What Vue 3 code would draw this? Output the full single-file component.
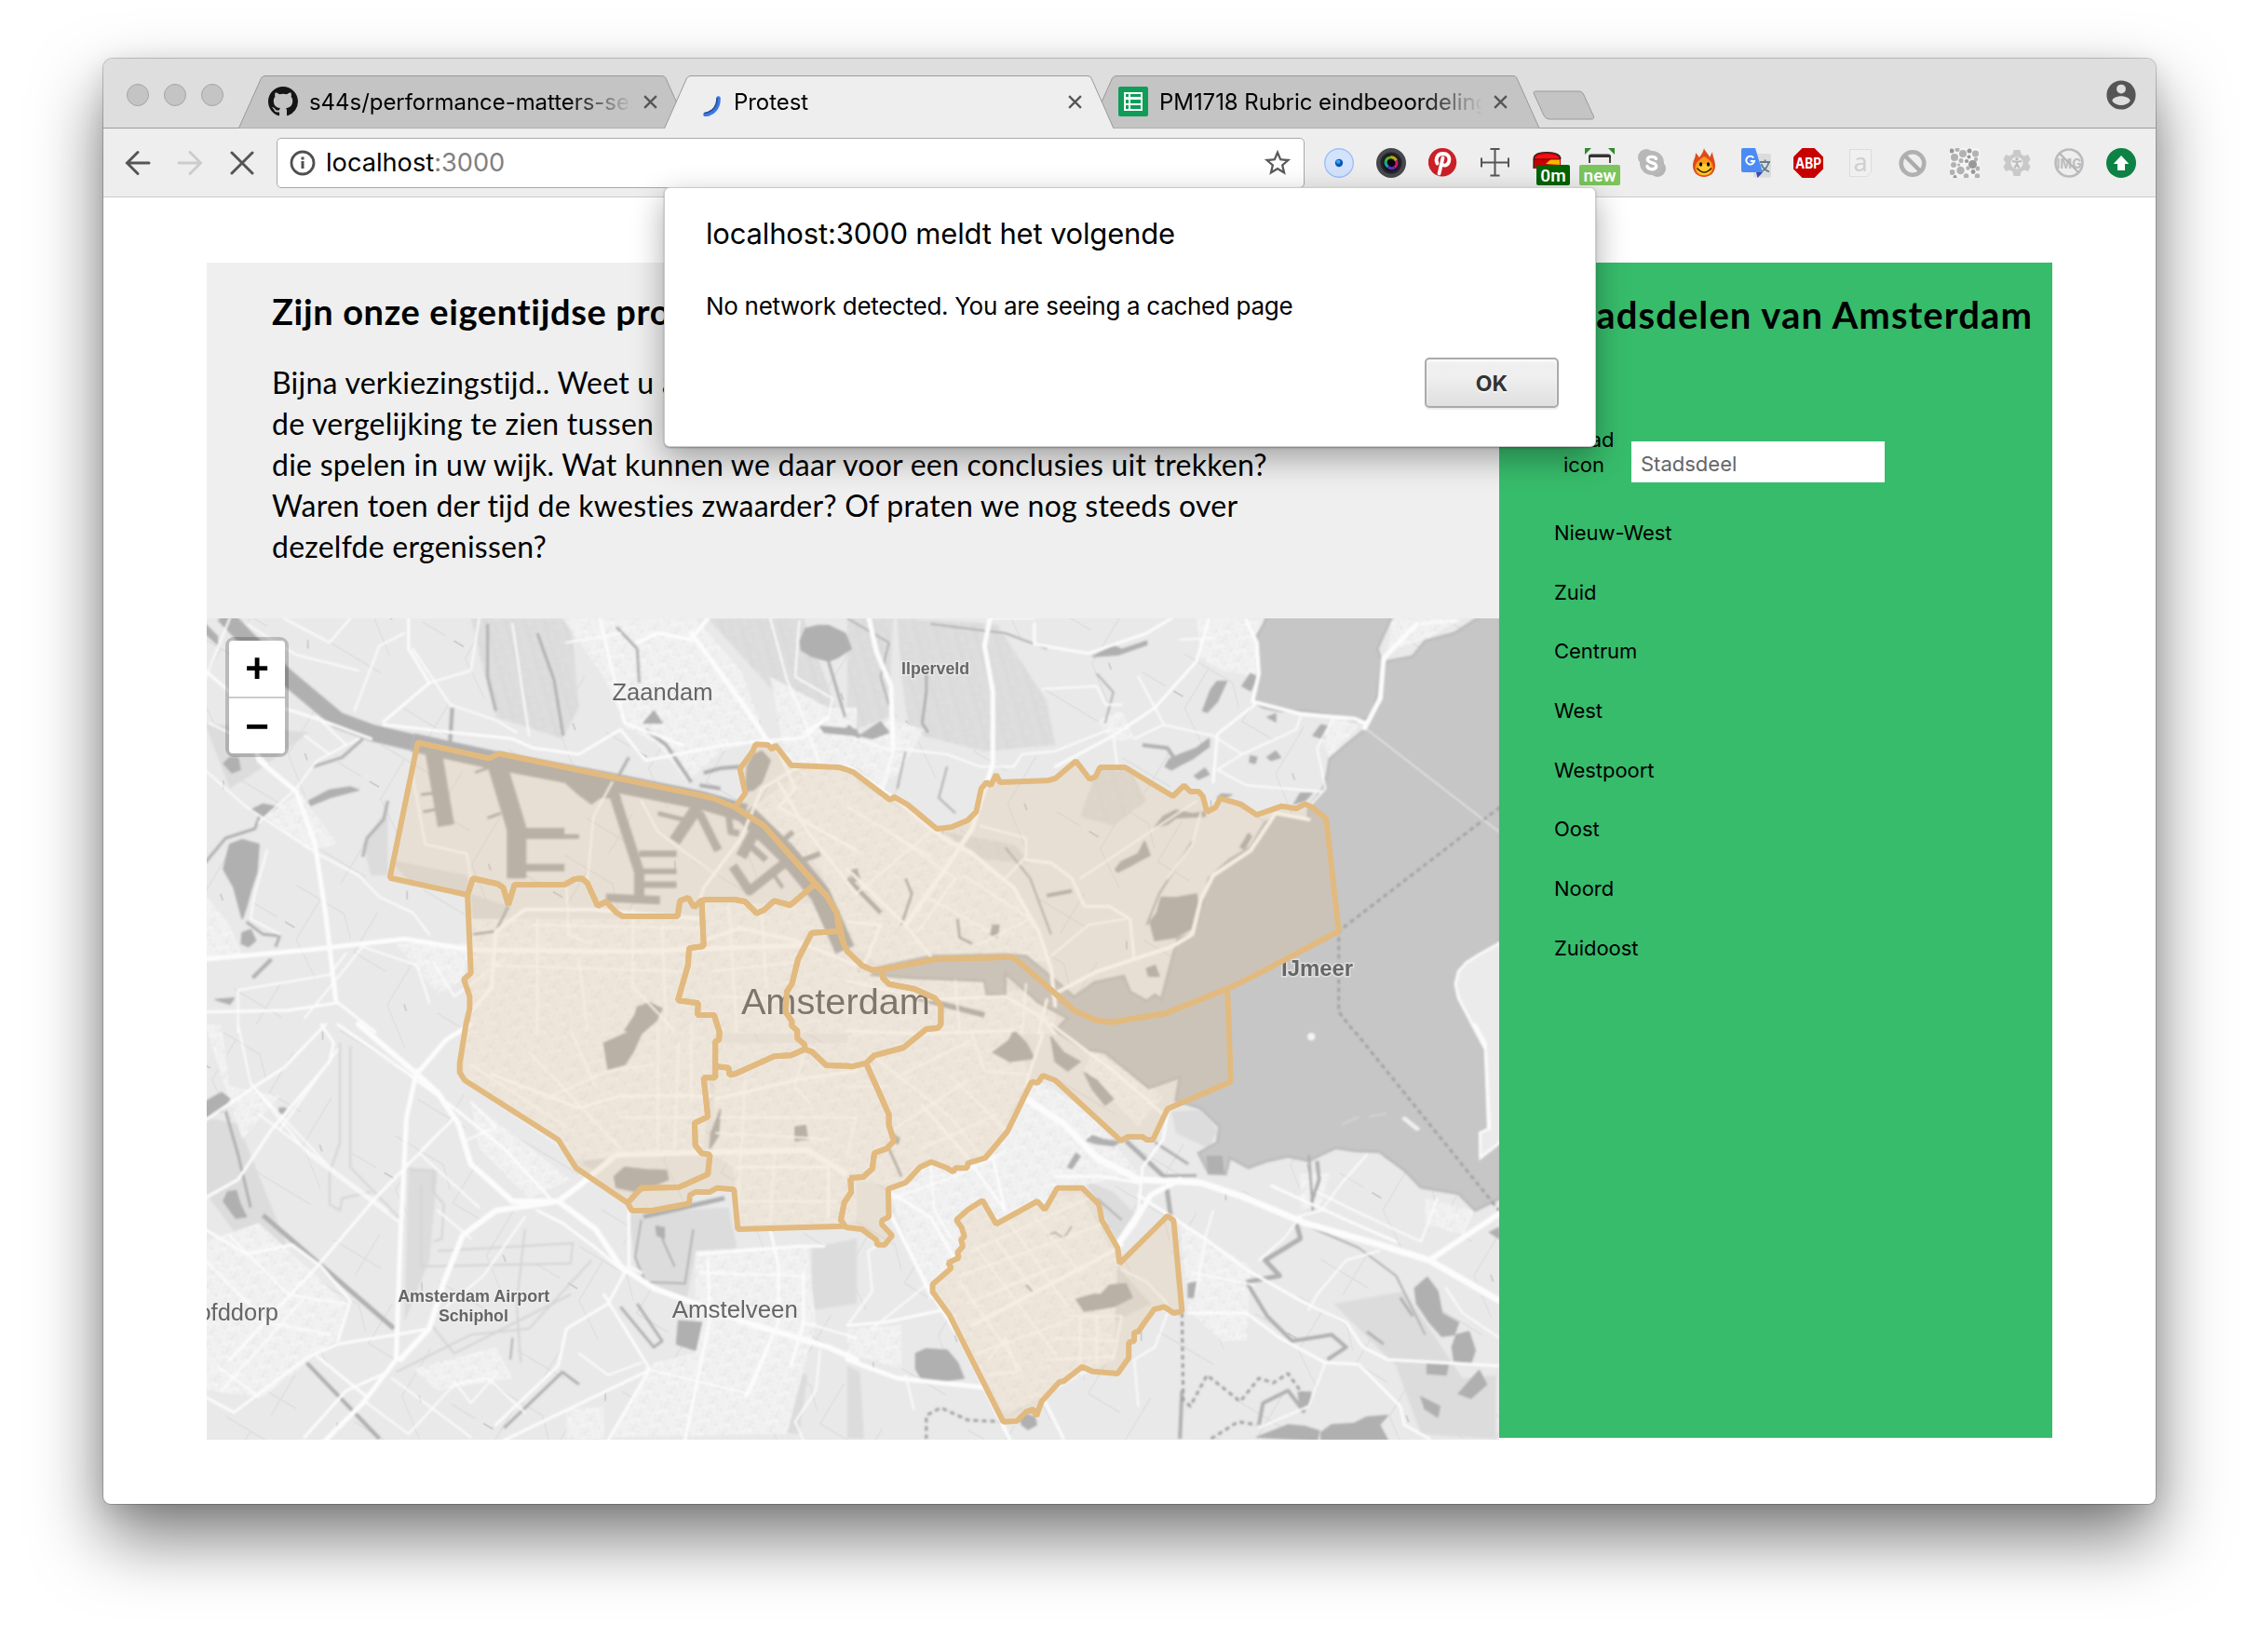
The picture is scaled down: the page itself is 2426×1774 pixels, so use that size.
<script setup>
/* Map sheets: four survey sheets, each with its own grid. */
const SX = 1 / 2.24
const SY = 1 / 3
const sheets = {
  a: [-2, -4],
  b: [688, -4],
  c: [-2, 436],
  d: [688, 436],
}
const sheetTransform = (k) => `translate(${sheets[k][0]} ${sheets[k][1]}) scale(${SX} ${SY})`

/* A line is written as "a 512,412 683,463 b 15,508 ..." */
function ring(...parts) {
  let sheet = 'a'
  const out = []
  for (const tok of parts.join(' ').split(/\s+/)) {
    if (tok.length === 1) { sheet = tok; continue }
    const [x, y] = tok.split(',').map(Number)
    out.push(`${(x * SX + sheets[sheet][0]).toFixed(1)},${(y * SY + sheets[sheet][1]).toFixed(1)}`)
  }
  return out.join(' ')
}

const portSouth = 'a 1468,868 1408,936 1370,922 1345,952 1327,962 1300,925 1275,918 1205,918 1193,922'
const portWest = 'a 1193,922 1177,943 1163,912 1143,922 1137,972 1005,972 990,960 965,925 945,938 920,865 907,850 890,852 865,870 745,870 730,935 718,880 705,868 645,850 632,903'
const westEdge = 'a 1195,920 1200,1068 1165,1075 1162,1130 1138,1243 1187,1252 1185,1290 1225,1290 1238,1345 c 1237,50 1228,55 1228,135'
const zuidNorth = 'c 1228,135 1260,140 1262,163 1275,160 1370,103 1410,100 1443,80'
const centreWest = 'c 1443,80 1443,65 1425,45 1425,20 1412,5 a 1412,1310 1397,1280 1400,1215 1412,1190 1427,1110 1460,1025 1525,1020'
const oostCentre = 'd 45,125 65,100 135,75 190,15 218,12 225,0 b 225,1300 225,1260 210,1235 160,1205 100,1190 85,1170 85,1143'
const ijNorth = 'b 85,1143 215,1110 390,1103 405,1110 500,1220 545,1275 600,1308 635,1313 765,1285 914,1205'

const districts = [
  ring('a 512,412 683,463 708,448 1220,590 1275,620 1345,680', portSouth, portWest, 'a 445,848'),
  ring('a 1275,620 1300,575 1287,497 1318,440 1325,418 1355,420 1365,435 1372,420 1410,485 1525,492 b 0,500 15,508 103,597 112,587 145,612 215,690 250,685 290,662 310,635 322,560 335,540 345,550 358,515 367,540 480,535 500,528 550,472 583,530 597,522 608,492 668,492 783,585 810,550 825,570 845,570 855,585 865,635 885,622 897,592 945,610 985,645 1045,617 1080,625 1100,610 1118,620 1152,658 1182,1020 970,1170 914,1205 765,1285 635,1313 600,1308 545,1275 500,1220 405,1110 390,1103 215,1110 85,1143 60,1145 35,1130 0,1085 a 1538,1065 1520,960 1495,905 1468,865 1345,680'),
  ring(ijNorth, 'd 918,0 922,185 770,272 735,372 720,372 710,362 675,362 658,375 500,180 470,165 458,188 443,185 385,345 332,430 290,447 288,463 260,463 255,475 240,463 202,443 175,460 140,510 98,530 100,620 83,632 83,645 108,680 90,710 72,710 70,695 35,660 0,655 c 1540,652 1530,630 1538,575 1555,540 1553,495 d 5,495 38,492 60,465 65,415 95,400 112,375 100,325 100,290', oostCentre),
  ring(centreWest, 'a 1538,1065 b 0,1085 35,1130 60,1145 85,1143 85,1170 100,1190 160,1205 210,1235 225,1260 225,1300 d 225,0 218,12 190,15 135,75 65,100 45,125 10,136 c 1550,134 1495,132 1460,88'),
  ring(westEdge, zuidNorth, centreWest, 'a 1520,960 1495,905', portSouth),
  ring('a 632,903 640,1155 623,1175 637,1230 637,1270 c 628,0 613,125 613,155 625,180 850,372 893,463 1017,575 1050,527 1140,525 1210,483 1215,420 1195,415 1180,390 1178,318 1210,298 1200,172 1228,172 1228,135 1228,55 1237,50 a 1238,1345 1225,1290 1185,1290 1187,1252 1138,1243 1162,1130 1165,1075 1200,1068 1195,920', portWest),
  ring('c 1017,575 1027,600 1075,600 1165,577 1167,550 1180,540 1215,540 1232,527 1273,532 1282,660 1540,650 1530,630 1538,575 1555,540 1553,495 d 5,495 38,492 60,465 65,415 95,400 112,375 100,325 100,290 45,125 10,136 c 1550,134 1495,132 1460,88 1443,80 1410,100 1370,103 1275,160 1262,163 1260,140 1228,135 1228,172 1200,172 1210,298 1178,318 1180,390 1195,415 1215,420 1210,483 1140,525 1050,527'),
  ring('d 505,527 565,527 605,580 612,630 650,720 655,770 770,617 785,632 805,925 785,930 762,910 738,918 715,960 700,990 690,992 690,1020 677,1025 677,1075 650,1125 590,1118 565,1103 520,1150 510,1152 467,1215 455,1262 447,1240 430,1248 408,1278 375,1280 245,935 205,862 205,838 250,785 243,768 268,752 265,735 278,715 273,692 282,685 275,655 262,630 290,597 325,567 358,643 457,570 475,597'),
]

const lake = ring('b 1012,0 1000,35 985,70 988,130 992,190 980,240 978,280 1000,298 1040,310 1100,310 1165,325 1235,345 1265,320 1275,250 1285,150 1275,110 1312,0')
const sea = ring('b 1530,0 1460,60 1390,85 1360,135 1300,150 1285,180 1280,290 1245,370 1190,430 1160,465 1155,510 1145,560 1110,620 1108,665 1040,645 1005,670 970,750 920,790 870,850 850,950 830,1030 795,1045 785,1090 755,1240 740,1225 720,1245 680,1215 665,1165 595,1185 545,1232 510,1190 430,1100 380,1095 200,1100 80,1135 60,1160 150,1170 330,1180 335,1222 380,1228 380,1155 440,1225 460,1250 530,1300 500,1340 d 490,10 570,80 620,90 725,205 800,170 790,245 850,270 895,330 890,380 845,415 870,480 910,482 920,430 965,462 1010,440 1060,425 1110,440 1140,420 1175,398 1225,408 1280,410 1340,470 1380,525 1470,545 1510,600 1570,560 1570,0 b 1570,0')
const flevoland = ring('b 1580,1050 1520,1095 1490,1120 1470,1150 1463,1190 1470,1235 1515,1350 d 1535,80 1545,335 1522,350 1523,430 1580,370')

/* Built-up areas */
const towns = {
  a: ['860,12 1180,12 1290,180 1350,400 1240,440 1160,540 1090,420 1010,360 960,200', '1360,200 1500,300 1568,300 1568,600 1500,580 1400,480', '1300,640 1420,520 1568,520 1568,1100 1480,820', '640,980 1200,980 1240,1350 640,1350', '1200,930 1480,930 1540,1060 1568,1110 1568,1350 1240,1350', '0,900 60,1000 90,1100 0,1110', '140,640 230,580 320,740 250,760', '460,1060 640,1060 620,1180 560,1220'],
  b: ['0,520 120,620 300,760 430,940 480,1120 200,1100 80,1130 0,1060', '840,12 1000,12 980,200 900,180 850,140', '20,400 100,340 185,370 130,500 80,560 20,480', '0,1150 340,1180 500,1250 500,1350 0,1350', '1310,12 1480,12 1390,80 1300,120', '600,340 660,310 690,400 640,410', '1140,400 1170,330 1230,360 1160,460'],
  c: ['630,0 1228,0 1200,400 900,440 620,180', '1230,60 1568,60 1568,640 1290,650 1270,460 1220,420', '1180,730 1450,710 1470,960 1400,1320 980,1330 1080,1090 1180,1060', '0,700 130,640 340,900 320,1010 140,1200 0,1180', '0,0 40,0 60,200 180,230 90,370', '640,250 880,500 780,560 660,400', '870,1240 960,1230 960,1335 870,1335', '500,1110 700,1040 740,1140 560,1180'],
  d: ['0,0 400,20 440,180 330,420 100,520 0,500', '100,540 330,400 460,180 580,280 700,480 560,520 360,620 260,620 200,900', '260,620 560,540 650,760 640,1080 380,1260 210,850', '590,80 760,230 700,330 570,150', '800,640 970,780 960,1020 900,1020 820,920', '0,980 130,970 130,1110 0,1060', '1390,560 1510,600 1480,680 1390,640', '1090,480 1160,480 1140,580 1090,600'],
}

const parks = {
  a: ['640,12 880,12 900,300 860,400 700,330 670,180', '1210,12 1440,12 1540,380 1460,400 1350,220', '445,790 630,840 640,900 500,870', '380,740 440,620 440,840 400,840', '640,900 730,940 650,1080', '0,350 250,380 130,500 60,560'],
  b: ['120,12 360,30 480,280 500,420 330,440 150,380 130,200', '600,500 680,500 720,600 640,680 560,650', '0,12 110,12 100,330 0,380', '230,700 400,740 440,800 330,790'],
  c: ['0,300 80,320 200,720 110,740 0,540', '640,30 760,40 740,190 640,150', '910,380 990,400 940,470 910,450', '1020,610 1260,590 1280,720 1180,740 1160,880 1040,820', '490,460 560,470 540,760 480,960', '1390,1100 1450,1130 1430,1320 1360,1310', '1460,720 1568,690 1568,900 1460,920', '1140,240 1090,420 1120,150'],
  d: ['570,500 640,540 700,620 650,700', '250,340 300,320 300,370 260,390', '190,240 220,220 230,250 200,270', '0,1100 30,1120 40,1335 0,1335', '780,280 850,275 890,340 870,400 790,350', '1170,900 1340,860 1480,1140 1560,1130 1560,1335 1380,1320 1320,1100', '520,900 560,760 650,780 730,900 640,960', '360,1120 430,1140 420,1240 380,1260'],
}

const ponds = {
  a: ['1445,45 1475,35 1500,35 1540,60 1555,110 1520,140 1500,150 1460,135 1435,115 1432,85', '1320,450 1340,440 1360,470 1340,540 1320,565 1300,570 1305,490', '45,820 60,740 90,725 130,740 125,830 110,890 100,940 90,980 70,880', '45,480 60,460 80,462 85,500 65,510', '110,630 140,610 175,620 140,655', '1040,1265 1070,1250 1100,1270 1085,1310 1050,1350 1010,1340 1035,1290', '90,1025 110,1015 122,1050 105,1070 88,1060', '0,30 30,70 30,95 0,60', '250,600 300,565 350,555 370,565 300,590 255,615', '870,545 980,550 1000,590 950,590 930,610 900,580', '1055,350 1080,310 1100,350', '1480,360 1568,370 1568,390 1490,380', '25,1240 70,1235 60,1255'],
  b: ['590,135 640,100 660,112 720,85 720,97 650,130', '855,310 875,240 890,215 912,215 890,280 865,315', '765,490 775,465 800,450 840,430 870,400 870,425 830,465 800,485 780,500', '835,520 860,495 870,515 845,530', '1120,390 1140,355 1155,360 1145,400', '1010,460 1030,440 1042,460 1020,470', '970,455 985,460 980,480 968,475', '1010,330 1030,320 1030,345', '740,685 760,650 790,630 830,642 860,635 860,650 790,655 770,675', '645,820 660,795 700,770 715,730 728,775 700,795 680,810 650,830', '755,910 790,912 840,900 845,950 830,1010 790,1040 740,1050 728,990 745,960', '945,750 965,705 972,715 955,755', '890,590 900,578 925,580 905,592', '1075,610 1090,575 1118,575 1100,600', '950,230 970,190 985,200 970,245', '30,390 80,345 100,380 60,400', '720,1140 740,1130 750,1165 725,1165', '345,1030 350,1000 365,1000 360,1040'],
  c: ['0,250 40,220 60,240 40,280 0,300', '45,570 55,540 75,535 85,580 100,620 75,625', '985,490 1010,460 1060,468 1110,470 1115,500 1080,520 1040,540 990,525', '960,60 1060,0 1030,90 1010,130 970,145', '1140,955 1195,960 1180,1050 1135,1030', '180,270 195,270 190,290 178,285', '1085,650 1105,655 1105,690 1088,680', '1240,275 1235,360 1215,400 1218,350', '1420,330 1445,325 1450,370 1420,375'],
  d: ['165,1060 190,1045 240,1050 265,1090 280,1140 230,1150 180,1145 165,1110', '550,885 590,870 610,870 630,840 670,835 685,880 640,910 570,925', '1365,850 1395,815 1420,860 1430,930 1470,960 1460,1000 1430,1005 1400,960 1370,900', '1455,1040 1465,1000 1495,990 1510,1050 1500,1090 1460,1085', '1395,1095 1445,1098 1440,1130 1395,1125', '1470,1190 1520,1115 1538,1160 1500,1205', '1140,1315 1165,1290 1220,1285 1250,1265 1300,1260 1280,1290 1300,1340 1140,1340', '985,1330 1060,1290 1100,1295 1135,1310 1130,1340', '1085,1185 1115,1185 1110,1230 1090,1245', '415,1265 430,1255 450,1265 455,1290 435,1305 420,1290', '1380,1200 1425,1230 1420,1265 1390,1240', '865,425 900,425 905,480 870,480', '350,90 390,50 400,20 430,60 450,110 390,120', '490,40 520,90 560,120 530,150 500,120', '570,155 600,180 640,240 620,260 590,210', '1545,670 1568,655 1568,690', '820,835 838,830 832,880 820,880', '575,375 590,358 620,372 655,378 640,392 600,385', '530,460 550,415 560,425 540,465', '112,355 125,368 122,385 110,378'],
}

/* Canals and harbour basins: [width, points] */
const canals = {
  a: [[18, '45,0 95,70 195,200 320,340 400,380 500,412'], [20, '500,412 700,470 960,535 1200,600 1300,640'], [22, '1300,640 1400,770 1480,900 1500,960 1540,1080'], [18, '550,440 580,680'], [21, '700,470 750,690 750,850'], [12, '760,705 865,705'], [5, '865,715 900,715'], [8, '760,815 865,815'], [11, '975,540 1045,830 1045,930'], [7, '1045,770 1135,770'], [6, '1050,827 1135,827'], [7, '1045,870 1135,870'], [9, '965,912 1095,920'], [13, '1185,620 1130,730'], [9, '1190,640 1235,760'], [12, '1330,680 1290,780'], [10, '1270,810 1310,890 1395,800'], [7, '1260,650 1265,700 1285,705'], [7, '1300,730 1350,790'], [5, '1090,640 1150,660'], [6, '1440,790 1480,770'], [6, '1380,740 1415,700'], [4, '1360,820 1390,880'], [9, '1560,820 1568,860'], [4, '595,300 590,410'], [3, '680,30 680,200 700,310'], [3, '800,60 840,210 862,390'], [4, '1170,540 1110,420 1060,370'], [3, '0,800 50,720 120,690 140,620'], [3, '440,600 430,660 390,720 380,780'], [3, '1500,150 1540,330'], [3, '100,990 140,1030 180,1035 170,1070'], [4, '160,1110 115,1170'], [3, '260,490 330,460 380,400'], [3, '990,40 1040,110 1045,220'], [3, '1020,460 995,520'], [3, '520,580 550,575'], [3, '525,635 555,628'], [3, '650,508 690,490'], [3, '680,655 712,640'], [3, '645,1030 700,1020 730,940'], [4, '1200,510 1240,495 1290,490'], [4, '1190,550 1240,560']],
  b: [[2, '600,190 640,250 620,350'], [2, '0,12 100,90 80,200 100,290'], [2, '200,30 380,60 480,110'], [4, '710,420 770,430 785,460'], [2, '380,750 440,850 490,1030'], [2, '830,730 750,900 720,1000'], [4, '480,905 540,890'], [5, '0,850 80,960'], [3, '140,850 155,900 130,1000'], [3, '265,980 270,1040 300,1060'], [3, '195,380 180,350 190,250 190,180'], [5, '0,360 30,395'], [6, '170,1235 330,1290'], [2, '240,490 220,590 260,640'], [2, '140,440 120,560']],
  c: [[5, '140,615 300,800 455,980'], [3, '50,280 80,420 110,590'], [4, '245,1090 420,1335'], [5, '1055,620 1250,560'], [2, '1050,630 1035,750 1060,830 1155,835 1175,660'], [3, '1000,910 1080,1040 1100,1020 1040,900'], [2, '1100,690 1130,780'], [3, '720,1300 860,1120 900,1160'], [2, '740,1010 735,1080']],
  d: [[5, '670,375 765,495 778,620'], [5, '1080,640 1090,690 1005,760 1040,810 960,830'], [4, '960,830 1010,940 1070,1020 1165,1000 1200,1040 1155,1080'], [3, '760,488 840,487'], [4, '1130,440 1135,500 1115,580'], [2, '1090,640 1230,720 1320,810 1390,1000'], [3, '1110,420 1120,600'], [2, '600,560 660,630'], [3, '740,380 820,450'], [4, '990,1290 1000,1220 1060,1180 1100,1250'], [4, '805,1180 800,1335'], [3, '1330,880 1360,940'], [3, '1250,990 1290,1030'], [3, '100,400 130,490'], [2, '480,680 500,670 520,690 540,650'], [3, '430,840 450,865']],
}

/* Roads: [width, points] */
const roads = {
  a: [[5, '100,320 130,470 220,570 265,740 290,960 315,1240'], [5, '0,1110 250,1080 480,1045 640,1080 1030,1085 1450,1065'], [5, '1170,60 1220,150 1300,300 1350,400 1380,440'], [4, '1040,90 1090,60 1170,80 1210,12'], [3, '430,345 540,220 490,110 490,12'], [2, '360,310 420,100 480,60'], [2, '540,220 640,180 660,12'], [3, '430,355 600,380 740,400 790,430 900,450 1000,370 1060,470 1250,420 1440,395 1500,330'], [2, '500,110 590,290 700,340 750,380'], [3, '0,180 70,260 140,280 280,340 400,400'], [2, '0,500 100,620 270,770 370,840 420,910 500,960 540,1030'], [2, '130,670 220,560 270,470 370,400'], [3, '0,1280 200,1275 320,1250 410,1345'], [2, '80,1345 80,1210 300,1160 340,1090'], [4, '640,1280 690,1200 700,1020 770,950 930,950 1200,980'], [3, '1440,480 1340,560 1290,720 1200,880 1190,920'], [2, '980,540 935,650 920,860'], [2, '500,520 530,740 630,770 640,850'], [2, '1050,600 1090,700 1230,840'], [3, '1150,420 1010,350 950,12'], [2, '740,30 780,390'], [2, '100,30 220,130 370,180'], [2, '190,12 300,90 350,12'], [2, '150,760 120,900 110,980 180,1030'], [2, '870,870 875,1030 930,1060'], [2, '1030,950 1030,1200 1130,1340'], [2, '900,1110 920,1340'], [3, '1200,1050 1290,1010 1420,1050 1568,1130'], [2, '550,1120 600,1230 720,1110'], [2, '1430,20 1420,200 1510,270 1500,330 1440,380'], [2, '1360,12 1400,210 1440,330 1480,490'], [2, '870,90 1000,60'], [2, '540,1250 510,1130 380,1070 240,1300'], [2, '10,350 90,400 150,480'], [2, '0,210 60,12'], [2, '270,330 340,420 300,450 240,390'], [3, '1380,440 1420,560 1380,620 1568,760'], [3, '1380,540 1450,700 1568,900'], [2, '790,1000 1200,1010'], [2, '800,980 800,1345'], [2, '1100,1000 1110,1345'], [2, '700,1130 1150,1150'], [2, '1260,930 1280,1345'], [2, '1220,1150 1420,1120'], [2, '1230,1230 1400,1240'], [2, '1340,960 1350,1200']],
  b: [[5, '50,0 70,120 105,230 110,430'], [5, '345,0 330,100 350,250 350,480 300,690 230,830 140,1000'], [3, '450,30 450,95 580,125 720,60 780,12'], [3, '870,12 840,150 740,300 640,390 500,490'], [4, '960,20 985,90 990,190 975,280 1090,320 1220,335 1245,350'], [5, '1370,30 1290,140 1282,270 1245,365'], [2, '690,400 760,355 880,390 950,450 890,500 960,550 1140,570'], [3, '980,290 890,385 880,540'], [2, '950,450 1080,370 1090,330'], [2, '1170,330 1130,430 1150,560 1110,620'], [4, '0,490 110,590 230,720 300,770 400,880 460,1020 490,1140 500,1260'], [4, '1110,660 1030,640 1000,700 970,760 880,840 850,920 830,1030 780,1070 600,1150 500,1220'], [2, '110,430 240,450 320,490 400,490 420,450 500,440 630,370'], [2, '20,400 110,440 80,590'], [3, '430,790 490,800 540,850 570,940 630,940 680,980 690,1110'], [2, '490,1100 580,1000 670,980'], [2, '320,680 430,720 430,780 380,850'], [2, '450,12 350,12'], [2, '640,390 650,500'], [3, '0,820 140,1000 200,1100'], [2, '280,840 440,980 320,1060'], [2, '100,700 260,850 170,1020'], [3, '0,990 80,1000 40,1130'], [2, '700,200 760,350'], [2, '850,640 830,740 770,850'], [2, '560,850 840,600'], [2, '800,80 880,75'], [3, '0,1180 200,1240 380,1230 470,1300 500,1350'], [2, '260,1180 270,1350'], [2, '430,1190 420,1350'], [3, '480,1240 460,1350'], [2, '470,240 600,230 620,290 660,290'], [1, '1250,370 1568,700'], [2, '1380,30 1470,20'], [2, '0,620 200,780'], [2, '20,900 200,700'], [2, '180,900 340,1020']],
  c: [[6, '370,0 510,160 560,220 610,320 640,450 740,570 850,570 900,520 990,420 1280,410 1450,405 1540,480'], [5, '510,150 485,300 470,700 460,1080 380,1220 290,1340'], [6, '850,570 700,600 620,680 575,830 540,980 470,1080'], [6, '850,570 940,660 1000,780 1080,850 1180,900 1300,960 1500,1040 1568,1080'], [5, '510,160 580,50 640,0'], [3, '800,600 860,640 940,720 1010,800 970,900 870,980 850,1100 700,1290'], [3, '0,560 80,500 160,340 300,120 310,60 280,0'], [3, '0,310 120,200 190,140 290,0'], [2, '80,0 110,190 250,420 470,640'], [3, '600,300 410,560 270,780 60,1080'], [2, '110,190 300,460'], [3, '0,660 100,740 210,710 280,780 350,890 320,1020'], [3, '0,1200 70,1250 250,1070 320,1030 460,1000 540,980'], [3, '320,0 480,150 600,270 720,400 830,560'], [2, '770,620 670,810 580,910'], [3, '1020,600 1020,780 1050,800'], [2, '640,250 700,330 620,380'], [2, '820,240 970,150 1080,130'], [2, '1090,0 1090,400'], [2, '1170,0 1170,250'], [3, '690,160 900,270 1000,230 1220,230'], [2, '780,90 1000,400'], [3, '1230,240 1420,180 1568,150'], [2, '1240,300 1568,300'], [2, '1300,180 1280,650'], [3, '1280,460 1500,460 1500,620'], [2, '1370,420 1360,640'], [2, '1440,100 1420,200 1460,260'], [3, '1360,660 1380,780 1380,960 1300,1200'], [3, '1190,740 1430,715 1490,715'], [2, '1190,800 1440,810'], [3, '1210,760 1215,950 1155,1340'], [3, '960,870 1070,1110 970,1340'], [3, '720,1340 1060,1120'], [2, '1060,1110 1310,1190 1360,1030'], [3, '1440,800 1440,960 1410,1100'], [2, '1440,960 1568,1010'], [2, '380,1210 490,1320 600,1160 680,1140 770,1250'], [3, '270,1070 390,1200'], [2, '130,1200 30,1100'], [2, '0,760 150,960 300,1000'], [2, '60,680 200,870 340,900'], [2, '40,1180 240,880'], [2, '130,290 440,600'], [2, '520,420 660,590'], [2, '180,340 320,80'], [3, '240,1330 340,1180 440,1120'], [2, '900,1060 970,1130 1050,1090'], [2, '1480,1050 1470,1180 1420,1280 1440,1340'], [2, '560,600 640,690'], [2, '600,1150 640,1220 700,1130'], [2, '450,1140 640,1330'], [2, '640,130 870,330'], [2, '880,20 940,200'], [2, '1000,300 1200,300'], [2, '1140,60 1130,400'], [2, '1290,570 1520,570'], [2, '1230,350 1500,370']],
  d: [[7, '430,240 520,320 600,430 700,500 850,510 960,560 1100,640 1280,710 1400,760 1568,890'], [6, '650,710 690,640 730,550 800,500'], [6, '1400,760 1568,610'], [4, '100,600 190,840 280,1030 390,1335'], [5, '0,1080 120,1140 330,1170'], [4, '300,970 640,730 660,710'], [3, '770,290 760,370 710,460 700,600 650,700'], [3, '700,550 860,690 960,790 1090,890 1200,960 1240,1040 1300,1080 1568,1100'], [3, '820,930 960,930 1040,1010 1150,1090 1230,1095 1330,1230 1340,1290 1400,1335'], [2, '1150,1090 1110,1230 990,1300'], [3, '1020,520 1200,630 1320,700'], [2, '1250,420 1190,510 1140,600 1080,620'], [3, '490,0 640,150 760,290'], [3, '430,190 470,30'], [2, '1130,540 1220,600 1380,700 1420,560'], [3, '300,450 380,600 350,430'], [3, '180,260 290,430'], [2, '250,170 390,350'], [2, '60,100 250,300 320,420'], [3, '500,490 610,490 700,510'], [2, '110,560 260,490 380,410'], [3, '100,540 200,620 260,760'], [2, '200,450 210,600 250,690'], [2, '390,640 530,910'], [2, '310,720 500,1060'], [2, '270,830 420,1120'], [2, '300,730 580,560'], [2, '270,810 620,640'], [2, '290,900 500,780'], [2, '310,1060 540,950'], [2, '340,1130 410,1120 380,1010 340,1080'], [2, '530,940 660,940 640,1080'], [2, '560,940 560,1090'], [2, '600,940 600,1090'], [2, '500,1010 650,1020'], [2, '480,1080 640,1070'], [2, '0,970 60,860 50,730 90,700'], [3, '0,970 90,960 230,920'], [2, '190,840 60,980'], [2, '770,930 740,1040 690,1080 700,1230'], [2, '860,700 840,860'], [2, '830,800 980,840'], [2, '1280,730 1200,760 1130,870 1110,920'], [2, '880,600 860,690'], [2, '1090,620 1050,690 990,760'], [2, '140,1130 160,1240'], [3, '470,1200 520,1335'], [3, '0,20 150,30 400,20'], [2, '300,30 330,150 420,160'], [2, '0,200 90,200'], [2, '20,300 0,420'], [2, '1440,850 1480,930 1568,1010'], [3, '1510,0 1535,60 1542,330'], [2, '660,790 720,830 770,900'], [2, '120,170 300,50'], [2, '110,340 290,180'], [2, '180,400 360,290'], [2, '360,700 450,860'], [2, '450,620 560,800']],
}

const outlines = {
  c: ['325,60 325,380 300,480 300,580 325,600 330,560 400,540', '350,70 350,460 480,640', '495,470 550,470 550,540 575,580 570,690 550,700', '520,520 520,780 880,770 885,705 560,730', '770,660 750,900 760,1090', '880,870 600,1060 540,960', '460,1120 640,1000 780,980 930,760'],
}

const dashes = [
  [4, ring('b 1570,620 1182,1020 1182,1280 1220,1345 d 1225,30 1568,600')],
  [4, ring('d 375,1280 290,1275 225,1235 190,1260 190,1335')],
  [4, ring('d 805,930 808,1210 825,1230 865,1130 945,1215 990,1140 1025,1155 1060,1125 1095,1190')],
  [4, ring('d 875,1335 940,1280 985,1290')],
]

const labels = [
  { t: 'Zaandam', s: 'a', x: 980, y: 275, w: 108, size: 26 },
  { t: 'Ilperveld', s: 'b', x: 130, y: 191, w: 73, size: 18, b: true },
  { t: 'IJmeer', s: 'b', x: 1044, y: 1165, w: 77, size: 23, b: true },
  { t: 'Amsterdam', s: 'a', x: 1290, y: 1288, w: 203, size: 39 },
  { t: 'Amsterdam Airport', s: 'c', x: 464, y: 893, w: 163, size: 18, b: true },
  { t: 'Schiphol', s: 'c', x: 562, y: 956, w: 75, size: 18, b: true },
  { t: 'Amstelveen', s: 'c', x: 1124, y: 946, w: 135, size: 26 },
  { t: 'Hoofddorp', s: 'c', x: -90, y: 953, w: 119, size: 26 },
].map((l) => ({ ...l, px: l.x * SX + sheets[l.s][0], py: l.y * SY + sheets[l.s][1] }))

const areas = ['Nieuw-West', 'Zuid', 'Centrum', 'West', 'Westpoort', 'Oost', 'Noord', 'Zuidoost']

const dots = [[2, 3, 2.5], [8, 1.5, 2.5], [14, 6, 4], [21, 3, 2.5], [27.5, 6, 3.5], [5, 10, 4], [20.5, 9.5, 2], [28, 12, 2.2], [12, 13.5, 2.5], [18, 14, 2], [4, 18, 3], [11.5, 24, 4.2], [24.5, 17.5, 4.5], [2.5, 26, 3], [19.5, 21.5, 2.2], [25, 25.5, 2.4], [30, 22, 2.5], [17.500, 30, 2.8], [5.5, 31, 2], [29.500, 30, 2.8], [9.500, 18, 1.6]]
</script>

<template>
  <div class="desktop">
    <div class="window">
      <header class="tabstrip">
        <div class="lights"><i></i><i></i><i></i></div>
        <div class="tab">
          <svg class="shape" viewBox="0 0 483 57"><path d="M.5 56.5 24.500 3Q26 .5 29 .5H455Q458 .5 459 3L483 56.500" /></svg>
          <svg class="fav" viewBox="0 0 16 16"><path fill="#161514" d="M8 0C3.580 0 0 3.580 0 8c0 3.540 2.290 6.530 5.470 7.590.4.070.55-.17.55-.38 0-.19-.01-.82-.01-1.490-2.010.37-2.530-.49-2.690-.94-.09-.23-.48-.94-.82-1.130-.28-.15-.68-.52-.01-.53.63-.01 1.080.58 1.230.82.72 1.210 1.870.87 2.330.66.070-.52.28-.87.51-1.070-1.780-.2-3.640-.89-3.640-3.950 0-.87.31-1.590.82-2.150-.08-.2-.36-1.020.08-2.120 0 0 .67-.21 2.200.82.64-.18 1.320-.27 2-.27s1.360.09 2 .27c1.530-1.040 2.200-.82 2.200-.82.44 1.100.16 1.920.08 2.120.51.56.82 1.270.82 2.150 0 3.070-1.870 3.750-3.650 3.950.29.25.54.73.54 1.480 0 1.070-.01 1.930-.01 2.200 0 .21.15.46.55.38A8.010 8.010 0 0 0 16 8c0-4.420-3.580-8-8-8z" /></svg>
          <span class="title">s44s/performance-matters-server</span>
          <svg class="close" viewBox="0 0 16 16"><path d="M2 2 14 14M14 2 2 14" /></svg>
        </div>
        <div class="tab active">
          <svg class="shape" viewBox="0 0 483 57"><path d="M.5 57 24.500 3Q26 .5 29 .5H455Q458 .5 459 3L483 57" /></svg>
          <svg class="fav" viewBox="0 0 32 32"><path d="M27.500 12.500C28 21 23 29 13.500 30" fill="none" stroke="#3b78e7" stroke-width="4.500" stroke-linecap="round" /><path d="M26 12C26.500 20 22 27 12.500 28.600" fill="none" stroke="#2a4f95" stroke-width="1.600" /></svg>
          <span class="title">Protest</span>
          <svg class="close" viewBox="0 0 16 16"><path d="M2 2 14 14M14 2 2 14" /></svg>
        </div>
        <div class="tab">
          <svg class="shape" viewBox="0 0 483 57"><path d="M.5 56.500 24.500 3Q26 .5 29 .5H455Q458 .5 459 3L483 56.500" /></svg>
          <svg class="fav" viewBox="0 0 32 32"><rect width="32" height="32" rx="2" fill="#0f9d58" /><path fill="#fff" fill-rule="evenodd" d="M6 6h20v20H6zM8 8v3h3V8zm5 0v3h11V8zM8 14v4h3v-4zm5 0v4h11v-4zM8 20v4h3v-4zm5 0v4h11v-4z" /></svg>
          <span class="title">PM1718 Rubric eindbeoordeling</span>
          <svg class="close" viewBox="0 0 16 16"><path d="M2 2 14 14M14 2 2 14" /></svg>
        </div>
        <svg class="newtab" viewBox="0 0 68 32"><path d="M4 1H50Q53 1 54.500 4L65 27Q67 31 63 31H18Q14 31 12 27L1.500 4Q0 1 4 1Z" fill="#c4c4c4" stroke="#9a9a9a" /></svg>
        <svg class="profile" viewBox="0 0 24 24"><path fill="#555" d="M12 .3a11.700 11.700 0 1 0 0 23.400A11.700 11.700 0 0 0 12 .3zm0 3.200a3.700 3.700 0 1 1 0 7.400 3.700 3.700 0 0 1 0-7.400zM12 20.300c-3 0-5.700-1.300-7.200-3.400C4.800 14.200 9.500 13 12 13s7.200 1.200 7.200 3.900c-1.500 2.100-4.200 3.400-7.200 3.400z" /></svg>
      </header>

      <div class="toolbar">
        <nav class="nav">
          <svg viewBox="0 0 28 28"><path d="M26 14H3M14 2.500 2.500 14 14 25.500" stroke="#555" /></svg>
          <svg viewBox="0 0 28 28"><path d="M2 14H25M14 2.500 25.500 14 14 25.500" stroke="#ccc" /></svg>
          <svg viewBox="0 0 28 28"><path d="M3 3 25 25M25 3 3 25" stroke="#555" /></svg>
        </nav>
        <div class="omnibox">
          <svg class="info" viewBox="0 0 28 28"><circle cx="14" cy="14" r="12" fill="none" stroke="#505050" stroke-width="2.800" /><path d="M14 12v8M14 7.500v3" stroke="#505050" stroke-width="3" /></svg>
          <span class="url">localhost<em>:3000</em></span>
          <svg class="star" viewBox="0 0 24 24"><path fill="#5a5a5a" d="M22 9.240l-7.190-.62L12 2 9.190 8.630 2 9.240l5.460 4.730L5.820 21 12 17.270 18.180 21l-1.630-7.030L22 9.240zM12 15.400l-3.760 2.270 1-4.280-3.320-2.880 4.380-.38L12 6.100l1.710 4.040 4.380.38-3.320 2.880 1 4.280L12 15.400z" /></svg>
        </div>
        <div class="extensions">
          <span><svg viewBox="0 0 32 32"><circle cx="16" cy="16" r="15.300" fill="#d4e3fc" stroke="#9dc0fa" stroke-width="1.400" /><circle cx="16" cy="16" r="4.200" fill="#0b57b8" /><circle cx="15.200" cy="14.600" r="2.200" fill="#35a8ee" /></svg></span>
          <span><svg viewBox="0 0 32 32"><circle cx="16" cy="16" r="16" fill="#46484e" /><circle cx="16" cy="16" r="11.500" fill="#222327" /><circle cx="16" cy="16" r="8.500" fill="#08080a" /><g fill="none" stroke-width="3.200"><path d="M10 15a6 6 0 0 1 5-5" stroke="#4fae2b" /><path d="M15 10a6 6 0 0 1 6.500 3.500" stroke="#b7a520" /><path d="M21.500 13.500a6 6 0 0 1-2 7.500" stroke="#d0157c" /><path d="M19.500 21a6 6 0 0 1-7-1" stroke="#5a2fc0" /><path d="M12.500 20a6 6 0 0 1-2.500-5" stroke="#17a5a0" /></g></svg></span>
          <span><svg viewBox="0 0 32 32"><circle cx="15" cy="15.200" r="15.200" fill="#cb2027" /><path d="M9.500 16.500C7 11 10 6 15.500 6c5.500 0 8 4 6.500 8.700-1.500 4.500-6 5-7.600 2.400M15.500 10.500 11.500 27.500" fill="none" stroke="#fff" stroke-width="3.800" stroke-linecap="round" /></svg></span>
          <span><svg viewBox="0 0 32 32"><path d="M15.500 1V29.500M10.500 1H20.500M10.500 29.500H20.500M1 15.500H30M1 10.500V20.500M30 10.500V20.500" fill="none" stroke="#555" stroke-width="2" /></svg></span>
          <span><svg viewBox="0 0 32 32"><path d="M1 22V12C1 7 6 4.500 15 4.500S30 7 30 12V22Z" fill="#c80000" /><path d="M2 12C3 8 8 6.500 15 6.500S28 8 29 12Z" fill="#f31010" /><path d="M1 12H29" stroke="#5a0000" /><path d="M14 17 19 12.500H29V18Z" fill="#f7b500" /><path d="M1 22V12C1 7 6 4.500 15 4.500S30 7 30 12" fill="none" stroke="#222" stroke-width="1.200" /></svg><b class="badge dark">0m</b></span>
          <span><svg viewBox="0 0 32 32"><path d="M0 0H7L0 7ZM25 0H32V7Z" fill="#2f8a2f" /><path d="M5 16V8M27 16V8" fill="none" stroke="#333" stroke-width="1.800" /><path d="M4 10V9Q4 6.500 7 6.500H25Q28 6.500 28 9V10Z" fill="#333" /></svg><b class="badge light">new</b></span>
          <span><svg viewBox="0 0 32 32"><circle cx="10" cy="10" r="9" fill="#b8b8b8" /><circle cx="22" cy="22" r="9" fill="#b4b4b4" /><circle cx="16" cy="16" r="13" fill="#b8b8b8" /><path d="M20.500 11.500C19.500 8.700 11.500 8.300 11.300 12.300 11.200 16.500 20.800 14.800 20.700 19.600 20.500 23.800 12 23.600 11 19.700" fill="none" stroke="#fff" stroke-width="3.400" stroke-linecap="round" /></svg></span>
          <span><svg viewBox="0 0 32 32"><path d="M16 0c1 4 5 6 6 10l3-6c0 5 3 9 3 15 0 7-5 12-12 12S4 26 4 19c0-6 3-8 3-14l4 5c2-3 4-5 5-10z" fill="#df4a1b" /><path d="M16 9c6 3 9.500 7 9.500 12 0 5-4 8.500-9.500 8.500S6.500 26 6.500 21c0-5 4-8 9.500-12z" fill="#f99b1c" /><ellipse cx="16" cy="23" rx="7.500" ry="6" fill="#ffcb2e" /><ellipse cx="12.500" cy="17.500" rx="1.500" ry="2.300" /><ellipse cx="20.500" cy="17.500" rx="1.500" ry="2.300" /><path d="M8.500 21.500q7.500 9 15.500 0" fill="none" stroke="#4a1b00" stroke-width="1.600" /></svg></span>
          <span><svg viewBox="0 0 32 32"><rect x="13" y="6" width="19" height="25.500" rx="1.500" fill="#dcdcdc" /><path d="M20 15H31M25.500 12.500V15M21.500 17c1 4 5 7 8.500 8.500M29.500 15c-.5 4-4 8.500-8 10.500" stroke="#607d8b" stroke-width="1.800" fill="none" /><path d="M16 26h7l-5.500 6z" fill="#3949ab" /><path d="M2 0h13l8 26H2q-2 0-2-2V2q0-2 2-2z" fill="#4c8bf5" /><path d="M13.200 10.500A4.400 4.400 0 1 0 14 14H9.800" fill="none" stroke="#fff" stroke-width="2" /></svg></span>
          <span><svg viewBox="0 0 32 32"><path d="M9.500 0h13L32 9.500v13L22.500 32h-13L0 22.500v-13z" fill="#c70000" /><text x="2" y="22" textLength="28" lengthAdjust="spacingAndGlyphs" font-size="16.500" font-weight="700" fill="#fff">ABP</text></svg></span>
          <span><svg viewBox="0 0 32 32"><path d="M4.500 1.500h23v24l-4.500 5H4.500z" fill="#f0f0f0" stroke="#ddd" /><text x="16" y="25" text-anchor="middle" font-size="27" fill="#cfcfcf" font-family="Noto Sans, sans-serif">a</text></svg></span>
          <span><svg viewBox="0 0 32 32"><circle cx="16" cy="16.500" r="12.300" fill="none" stroke="#b0b0b0" stroke-width="4.600" /><path d="M8 8.500 24 24.500" stroke="#ababab" stroke-width="4.400" /></svg></span>
          <span><svg viewBox="0 0 32 32"><rect width="32" height="32" fill="#f4f4f4" /><circle v-for="(d, i) in dots" :key="i" :cx="d[0]" :cy="d[1]" :r="d[2]" :fill="i % 3 ? '#b2b2b2' : '#989898'" /></svg></span>
          <span><svg viewBox="0 0 32 32"><path d="M12.500 2h7l1 4.500 3.500 2 4-1.500 2.500 5L28 16l2.500 4-2.500 5-4-1.500-3.500 2-1 4.500h-7l-1-4.500-3.500-2L4 25l-2.500-5L4 16l-2.500-4L4 7l4 1.500 3.500-2z" fill="#c9c9c9" /><circle cx="16" cy="16" r="6.500" fill="#ededed" /><circle cx="16" cy="11.700" r="1.700" fill="#bbb" /><path d="M11 14 16 15 21 14M16 14.500V18M16 17 13.500 21.500M16 17 18.500 21.500" fill="none" stroke="#bbb" stroke-width="2" /></svg></span>
          <span><svg viewBox="0 0 32 32"><circle cx="16" cy="16" r="14.500" fill="none" stroke="#bbb" stroke-width="2.600" /><text x="2.500" y="21.500" textLength="27" lengthAdjust="spacingAndGlyphs" font-size="15" font-weight="700" fill="#bdbdbd">IMG</text><path d="M6 6 26 26" stroke="#b5b5b5" stroke-width="2.200" /></svg></span>
          <span><svg viewBox="0 0 32 32"><circle cx="16" cy="16" r="16" fill="#0d8245" /><path d="M16 8 24.300 17H20v7H12V17H7.700z" fill="#fff" /></svg></span>
        </div>
      </div>

      <main class="page">
        <div class="left">
          <section class="intro">
            <h1>Zijn onze eigentijdse problemen</h1>
            <p>
              Bijna verkiezingstijd.. Weet u al waar<br />
              de vergelijking te zien tussen<br />
              die spelen in uw wijk. Wat kunnen we daar voor een conclusies uit trekken?<br />
              Waren toen der tijd de kwesties zwaarder? Of praten we nog steeds over<br />
              dezelfde ergenissen?
            </p>
          </section>
          <section class="map">
            <svg viewBox="0 0 1388 882" class="chart">
              <defs>
                <pattern id="streets" width="53" height="47" patternUnits="userSpaceOnUse" patternTransform="rotate(17)">
                  <rect width="53" height="47" fill="#ededed" />
                  <path d="M0 3H53M0 14H31M22 24H53M0 35H53M9 3V35M22 3V47M36 14V35M45 0V24M31 35V47M3 35V47M14 14V24M50 24V35M9 41H22M36 19H53M28 3V14M36 29H22" stroke="#fcfcfc" stroke-width="1.800" />
                  <path d="M5 8v4M12 29h6M27 8h4M40 30v3M25 41h4M41 41l4 1" stroke="#d0d0d0" stroke-width="1.600" />
                  <path d="M39 4h3v6M12 18v3" stroke="#bdbdbd" stroke-width="1.600" fill="none" />
                </pattern>
                <pattern id="polder" width="46" height="54" patternUnits="userSpaceOnUse" patternTransform="rotate(-12)">
                  <rect width="46" height="54" fill="#dfdfdf" />
                  <path d="M0 5H30M8 12H46M0 19H22M26 25H46M0 31H20M14 38H46M0 44H28M8 50H40M12 0V54M33 5V47" stroke="#cacaca" fill="none" />
                </pattern>
                <pattern id="meadow" width="230" height="176" patternUnits="userSpaceOnUse" patternTransform="rotate(31)">
                  <path d="M0 20H60L80 40M30 20V70L70 96M90 0V50H130M150 20v60l40 30M200 60h30M120 130h70M40 120v50M0 150h60" stroke="#dedede" fill="none" stroke-width="1.300" />
                  <path d="M10 60h12M165 70l6 5M105 140l5 8" stroke="#cdcdcd" stroke-width="2" />
                </pattern>
                <filter id="soft" x="-5%" y="-5%" width="110%" height="110%"><feGaussianBlur stdDeviation="0.8" /></filter>
              </defs>
              <rect width="1388" height="882" fill="#e9e9e9" />
              <rect width="1388" height="882" fill="url(#meadow)" />
              <g filter="url(#soft)">
                <g v-for="(list, k) in parks" :key="'p' + k" :transform="sheetTransform(k)">
                  <polygon v-for="(p, i) in list" :key="i" :points="p" :class="k === 'b' || (k === 'a' && i < 2) ? 'wet' : 'park'" />
                </g>
                <g v-for="(list, k) in towns" :key="'t' + k" :transform="sheetTransform(k)">
                  <polygon v-for="(p, i) in list" :key="i" :points="p" class="town" />
                </g>
                <polygon :points="lake" class="sea" />
                <polygon :points="sea" class="sea" />
                <g v-for="(list, k) in canals" :key="'c' + k" :transform="sheetTransform(k)">
                  <polyline v-for="(c, i) in list" :key="i" :points="c[1]" :stroke-width="c[0]" class="canal" />
                </g>
                <g v-for="(list, k) in ponds" :key="'w' + k" :transform="sheetTransform(k)">
                  <polygon v-for="(p, i) in list" :key="i" :points="p" class="pond" />
                </g>
                <g v-for="(list, k) in outlines" :key="'o' + k" :transform="sheetTransform(k)">
                  <polyline v-for="(p, i) in list" :key="i" :points="p" class="runway" />
                </g>
                <polygon :points="flevoland" class="polder" />
                <polyline v-for="(d, i) in dashes" :key="'d' + i" :points="d[1]" :stroke-width="d[0] - 1" class="dash" />
                <g v-for="(list, k) in roads" :key="'r' + k" :transform="sheetTransform(k)">
                  <polyline v-for="(r, i) in list" :key="i" :points="r[1]" :stroke-width="r[0]" class="road" />
                </g>
                <g :transform="sheetTransform('d')">
                  <ellipse cx="1116" cy="40" rx="9" ry="12" fill="#f4f4f4" />
                  <path d="M1337 300 1374 340" class="isle" />
                  <path d="M1190 322 1230 298M1255 298 1298 286" class="isle thin" />
                </g>
              </g>
              <g class="names">
                <text v-for="l in labels" :key="l.t" :x="l.px" :y="l.py" :textLength="l.w" :font-size="l.size" :class="{ bold: l.b }" lengthAdjust="spacingAndGlyphs">{{ l.t }}</text>
              </g>
              <g class="districts">
                <polygon v-for="(d, i) in districts" :key="i" :points="d" />
              </g>
            </svg>
            <div class="zoom"><button>+</button><button>−</button></div>
          </section>
        </div>
        <aside class="sidebar">
          <h2>Stadsdelen van Amsterdam</h2>
          <div class="search">
            <span class="alt">reload<br />icon</span>
            <input placeholder="Stadsdeel" />
          </div>
          <ul>
            <li v-for="a in areas" :key="a">{{ a }}</li>
          </ul>
        </aside>
      </main>

      <div class="dialog">
        <h3>localhost:3000 meldt het volgende</h3>
        <p>No network detected. You are seeing a cached page</p>
        <button>OK</button>
      </div>
    </div>
  </div>
</template>

<style>
body { background: #fff; }
</style>

<style scoped>
* { box-sizing: border-box; }
.desktop { width: 2426px; height: 1774px; padding: 63px 0 0 111px; overflow: hidden; font-family: Inter, 'Liberation Sans', sans-serif; color: #000; }
.window { position: relative; display: flex; flex-direction: column; width: 2204px; height: 1552px; background: #fff; border-radius: 10px 10px 8px 8px; box-shadow: 0 0 0 1px rgba(0, 0, 0, .2), 0 36px 74px rgba(0, 0, 0, .52), 0 6px 26px rgba(0, 0, 0, .1); }

.tabstrip { position: relative; display: flex; align-items: flex-end; height: 75px; background: #dedede; border-bottom: 1px solid #9b9b9b; border-radius: 10px 10px 0 0; }
.lights { display: flex; align-self: center; gap: 16px; width: 145px; padding-left: 25px; margin-top: 3px; }
.lights i { width: 24px; height: 24px; border-radius: 50%; background: #c4c4c4; border: 1px solid #a5a5a5; }
.tab { position: relative; display: flex; align-items: center; width: 483px; height: 57px; margin-bottom: -1px; padding: 0 0 1px 32px; font-size: 24px; }
.tab + .tab { margin-left: -26px; padding-left: 31px; }
.tab.active { z-index: 2; }
.shape { position: absolute; inset: 0; width: 483px; height: 57px; overflow: visible; }
.shape path { fill: #c4c4c4; stroke: #999; }
.active .shape path { fill: #eee; }
.fav { position: relative; width: 32px; height: 32px; margin-right: 12px; }
.title { position: relative; width: 347px; overflow: hidden; white-space: nowrap; letter-spacing: -.05px; -webkit-mask-image: linear-gradient(90deg, #000 80%, transparent 100%); mask-image: linear-gradient(90deg, #000 80%, transparent 100%); }
.close { position: relative; width: 17px; height: 17px; margin-left: 11px; }
.close path { stroke: #555; stroke-width: 2.200; }
.newtab { width: 68px; height: 32px; margin: 0 0 8px -7px; }
.profile { width: 32px; height: 32px; margin: 0 21px 19px auto; }

.toolbar { display: flex; align-items: center; height: 74px; padding: 0 9px 0 23px; background: #eee; border-bottom: 1px solid #ccc; }
.nav { display: flex; gap: 28px; width: 163px; }
.nav svg { width: 28px; height: 28px; }
.nav path { fill: none; stroke-width: 3; stroke-linecap: round; }
.omnibox { display: flex; align-items: center; width: 1104px; height: 54px; padding: 0 14px 0 13px; background: #fff; border: 1px solid #a9a9a9; border-radius: 5px; }
.info { width: 28px; height: 28px; margin-right: 11px; }
.url { flex: 1; font-size: 27.200px; line-height: 36px; }
.url em { font-style: normal; color: #808080; }
.star { width: 34px; height: 34px; margin-right: -3px; }
.extensions { display: flex; margin-left: 9px; }
.extensions span { position: relative; display: flex; justify-content: center; width: 56px; }
.extensions svg { width: 32px; height: 32px; }
.badge { position: absolute; top: 18px; height: 22px; border-radius: 2px; color: #fff; font: 600 19px/23px Roboto, sans-serif; text-align: center; }
.dark { left: 16px; width: 36px; background: #006400; }
.light { left: 6px; width: 44px; background: #7cc45c; }

.page { display: flex; align-items: flex-start; flex: 1; padding: 70px 111px 0; }
.left { width: 1388px; }
.intro { height: 382px; padding: 29px 0 0 70px; background: #efefef; font-family: Lato, sans-serif; }
h1, h2, h3, p, ul { margin: 0; padding: 0; }
h1 { font-size: 38px; line-height: 46px; letter-spacing: .64px; white-space: nowrap; }
.intro p { margin-top: 32px; font-size: 32px; line-height: 44px; letter-spacing: .25px; white-space: nowrap; }
.map { position: relative; height: 882px; overflow: hidden; }
.chart { display: block; width: 1388px; height: 882px; font-family: 'Liberation Sans', Arial, sans-serif; }
.chart polyline { fill: none; vector-effect: non-scaling-stroke; stroke-linejoin: round; }
.park { fill: #dcdcdc; }
.wet { fill: url(#polder); }
.town { fill: url(#streets); }
.sea { fill: #c6c6c6; stroke: #bdbdbd; stroke-width: 3; }
.canal { stroke: #b0b0b0; }
.pond { fill: #b0b0b0; stroke: #b0b0b0; stroke-width: 4; stroke-linejoin: round; }
.polder { fill: #ebebeb; stroke: #fafafa; stroke-width: 3; }
.runway { stroke: #d4d4d4; stroke-width: 2; }
.road { stroke: #fcfcfc; stroke-linecap: round; }
.dash { stroke: #a0a0a0; stroke-dasharray: 5 4; }
.isle { fill: none; stroke: #f0f0f0; stroke-width: 12; }
.thin { stroke: #d8d8d8; stroke-width: 4; }
.names text { fill: #666; paint-order: stroke; stroke: rgba(240, 240, 240, .6); stroke-width: 3px; }
.names .bold { font-weight: 700; }
.districts polygon { fill: #e2ba7f; fill-opacity: .2; stroke: #e2ba7f; stroke-width: 6; stroke-linejoin: bevel; }
.zoom { position: absolute; left: 20px; top: 20px; width: 68px; border: 4px solid rgba(0, 0, 0, .2); border-radius: 9px; background-clip: padding-box; }
.zoom button { display: block; width: 60px; height: 60px; padding: 0; border: 0; background: #fff; font: 700 44px/60px 'Liberation Sans', sans-serif; color: #000; border-radius: 4px 4px 0 0; }
.zoom button + button { height: 61px; border-top: 2px solid #ccc; border-radius: 0 0 4px 4px; }

.sidebar { width: 594px; height: 1262px; padding-top: 32px; background: #37bc6b; font-size: 22px; letter-spacing: -.05px; }
h2 { padding-right: 21px; font: 700 40px/48px Lato, sans-serif; letter-spacing: 1.080px; text-align: right; white-space: nowrap; }
.search { display: flex; align-items: flex-start; margin: 97px 0 0 57px; }
.alt { width: 68px; line-height: 26.500px; text-align: center; }
input { width: 272px; height: 44px; margin: 15px 0 0 17px; padding: 3px 10px 0; border: 0; background: #fff; font: 22px Inter, sans-serif; }
input::placeholder { color: #666; opacity: 1; }
ul { margin: 23px 0 0 59px; list-style: none; }
li { height: 63.700px; line-height: 63.700px; }

.dialog { position: absolute; left: 602px; top: 138px; display: flex; flex-direction: column; width: 1001px; height: 279px; padding: 29px 39px 0 44px; background: #fff; border: 1px solid rgba(0, 0, 0, .2); border-radius: 6px; box-shadow: 0 1px 2px rgba(0, 0, 0, .3), 0 12px 34px rgba(0, 0, 0, .33); z-index: 5; }
h3 { font-size: 31px; font-weight: 400; line-height: 40px; letter-spacing: -.17px; }
.dialog p { margin-top: 42px; font-size: 26px; line-height: 32px; letter-spacing: -.3px; }
.dialog button { align-self: flex-end; width: 144px; height: 54px; margin-top: 39px; padding-top: 3px; border: 2px solid #aaa; border-radius: 5px; background: linear-gradient(#f0f0f0, #efefef 38%, #dfdfdf); box-shadow: 0 2px 1px rgba(0, 0, 0, .08), inset 0 2px 3px rgba(255, 255, 255, .8); font: 700 23px Inter, sans-serif; color: #333; text-shadow: 0 2px 0 #f4f4f4; }
</style>
